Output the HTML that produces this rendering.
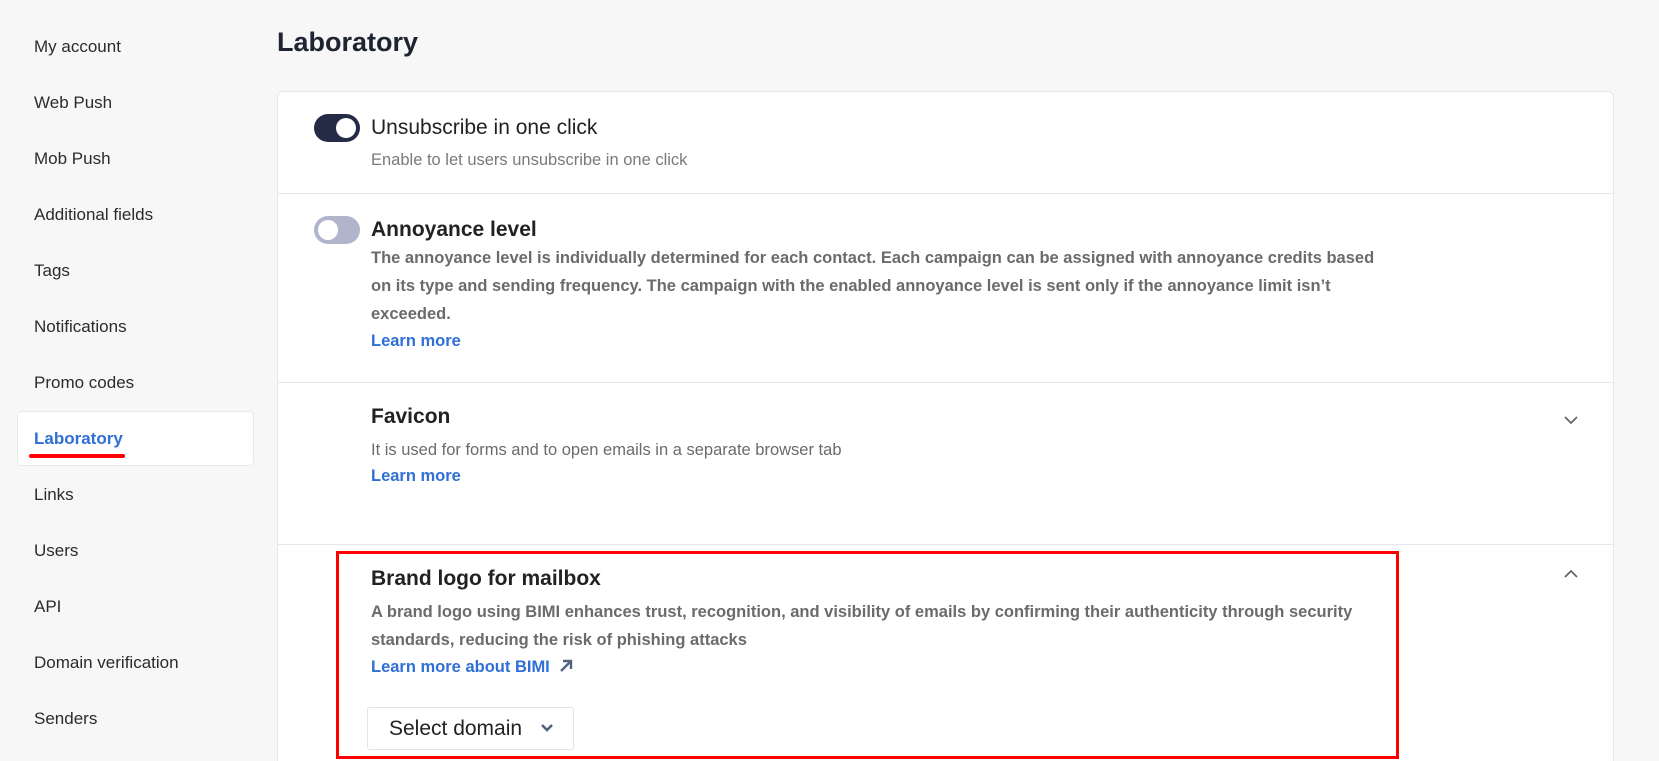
<!DOCTYPE html>
<html style="overflow:hidden;width:1659px;height:761px"><head><style>
*{box-sizing:border-box;margin:0;padding:0}
body{width:1659px;height:761px;overflow:hidden;background:#f7f7f8;font-family:"Liberation Sans",sans-serif;position:relative;color:#222}
.side a{position:absolute;left:34px;font-size:17px;color:#2b2b2b;text-decoration:none}
.act{position:absolute;left:17px;top:411px;width:237px;height:55px;background:#fff;border:1px solid #e8e8ec;border-radius:5px}
h1{position:absolute;left:277px;top:27px;font-size:27px;font-weight:bold;color:#1f2433}
.card{position:absolute;left:277px;top:91px;width:1337px;height:670px;background:#fff;border:1px solid #e6e6ea;border-bottom:none;border-radius:6px 6px 0 0}
.hr{position:absolute;left:277px;width:1337px;height:1px;background:#e8e8ec}
.t{position:absolute;left:371px;font-size:21px;color:#222}
.d{position:absolute;left:371px;font-size:16.5px;color:#6b6b6b;line-height:28px;width:1040px}
.l{position:absolute;left:371px;font-size:16.5px;color:#2f6fd6;font-weight:bold}
.tg{position:absolute;left:314px;width:46px;height:28px;border-radius:14px}
.tg i{position:absolute;top:4px;width:20px;height:20px;border-radius:50%;background:#fff}
.chev{position:absolute;left:1562px;width:18px;height:18px}
</style></head><body>
<div class="act"></div>
<div class="side">
<a style="top:37px">My account</a>
<a style="top:93px">Web Push</a>
<a style="top:149px">Mob Push</a>
<a style="top:205px">Additional fields</a>
<a style="top:261px">Tags</a>
<a style="top:317px">Notifications</a>
<a style="top:373px">Promo codes</a>
<a style="top:429px;color:#2f6fd6;font-weight:bold">Laboratory</a>
<a style="top:485px">Links</a>
<a style="top:541px">Users</a>
<a style="top:597px">API</a>
<a style="top:653px">Domain verification</a>
<a style="top:709px">Senders</a>
</div>
<div style="position:absolute;left:29px;top:454px;width:96px;height:4px;background:#f00;border-radius:2px"></div>
<h1>Laboratory</h1>
<div class="card"></div>
<div class="tg" style="top:114px;background:#232b45"><i style="left:22px"></i></div>
<div class="t" style="top:116px">Unsubscribe in one click</div>
<div class="d" style="top:146px;color:#7a7a7a">Enable to let users unsubscribe in one click</div>
<div class="hr" style="top:193px"></div>
<div class="tg" style="top:216px;background:#b0b5cc"><i style="left:4px"></i></div>
<div class="t" style="top:218px;font-weight:bold">Annoyance level</div>
<div class="d" style="top:244px;font-weight:bold;width:1020px">The annoyance level is individually determined for each contact. Each campaign can be assigned with annoyance credits based on its type and sending frequency. The campaign with the enabled annoyance level is sent only if the annoyance limit isn’t exceeded.</div>
<div class="l" style="top:332px">Learn more</div>
<div class="hr" style="top:382px"></div>
<div class="t" style="top:405px;font-weight:bold">Favicon</div>
<div class="d" style="top:436px">It is used for forms and to open emails in a separate browser tab</div>
<div class="l" style="top:467px">Learn more</div>
<svg class="chev" style="top:411px" viewBox="0 0 18 18"><path d="M3 6l6 6 6-6" fill="none" stroke="#666" stroke-width="1.8"/></svg>
<div class="hr" style="top:544px"></div>
<svg class="chev" style="top:565px" viewBox="0 0 18 18"><path d="M3 12l6-6 6 6" fill="none" stroke="#666" stroke-width="1.8"/></svg>
<div style="position:absolute;left:336px;top:551px;width:1063px;height:208px;border:3px solid #f00"></div>
<div class="t" style="top:567px;font-weight:bold">Brand logo for mailbox</div>
<div class="d" style="top:598px;font-weight:bold">A brand logo using BIMI enhances trust, recognition, and visibility of emails by confirming their authenticity through security standards, reducing the risk of phishing attacks</div>
<div class="l" style="top:658px">Learn more about BIMI <svg width="16" height="16" viewBox="0 0 16 16" style="vertical-align:-2px;margin-left:4px"><path d="M3 13L13 3M5 3h8v8" fill="none" stroke="#55627e" stroke-width="2.4"/></svg></div>
<div style="position:absolute;left:367px;top:707px;width:207px;height:43px;border:1px solid #e3e3e8;border-radius:3px;background:#fff;font-size:21px;color:#222;padding:9px 0 0 21px">Select domain<svg width="14" height="10" viewBox="0 0 14 10" style="margin-left:18px;vertical-align:2px"><path d="M2 2l5 5 5-5" fill="none" stroke="#55627e" stroke-width="2.6"/></svg></div>
</body></html>
